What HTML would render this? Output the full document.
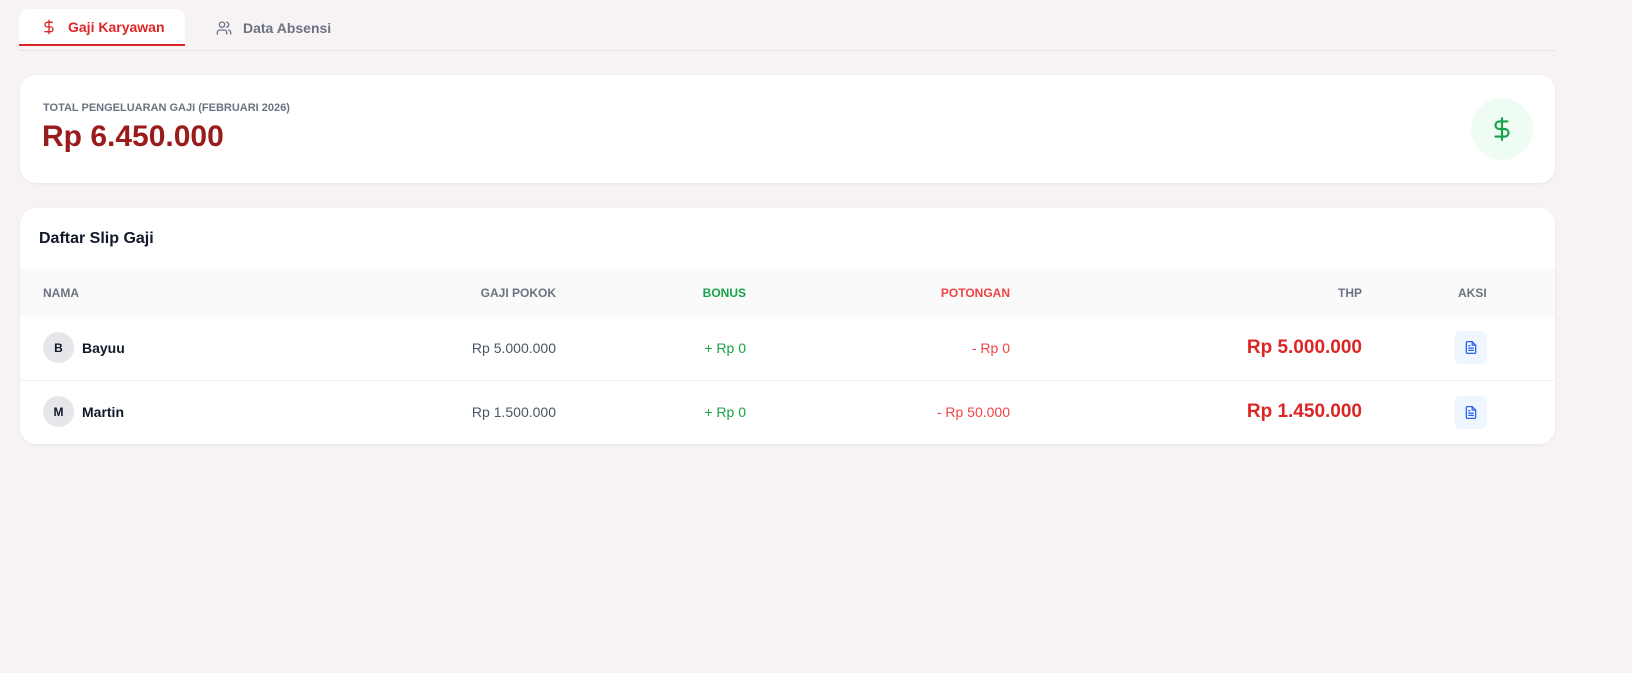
<!DOCTYPE html>
<html><head><style>
*{box-sizing:border-box;margin:0;padding:0}
body{width:1632px;height:673px;background:#f7f3f4;font-family:"Liberation Sans",Arial,sans-serif;position:relative;overflow:hidden}
.abs{position:absolute}
.tabline{left:19px;top:50px;width:1536px;height:1px;background:#e2e4e9}
.tab1{left:19px;top:9px;width:166px;height:37px;background:#fff;border-radius:10px 10px 0 0;border-bottom:2px solid #dc2626}
.card{background:#fff;border-radius:16px;box-shadow:0 1px 3px rgba(0,0,0,.06)}
.t{position:absolute;white-space:nowrap}
.r{text-align:right}
.hd{font-size:12px;font-weight:bold;color:#6b7280}
.cell{font-size:14px;color:#4b5563}
.btn{position:absolute;width:33px;height:33px;border-radius:7px;background:#eff6ff;display:flex;align-items:center;justify-content:center}
.av{position:absolute;left:23px;width:31px;height:31px;border-radius:50%;background:#e5e7eb;font-size:12px;font-weight:bold;color:#111827;display:flex;align-items:center;justify-content:center}
</style></head><body>
<div class="abs tabline"></div>
<div class="abs tab1"></div>
<svg class="abs" style="left:41px;top:19px" width="16" height="16" viewBox="0 0 24 24" fill="none" stroke="#dc2626" stroke-width="2" stroke-linecap="round"><path d="M12 2v20M17 5H9.5a3.5 3.5 0 0 0 0 7h5a3.5 3.5 0 0 1 0 7H6"/></svg>
<div class="t" style="left:68px;top:19px;font-size:14px;font-weight:bold;color:#dc2626">Gaji Karyawan</div>
<svg class="abs" style="left:216px;top:20px" width="16" height="16" viewBox="0 0 24 24" fill="none" stroke="#6b7280" stroke-width="2" stroke-linecap="round"><path d="M16 21v-2a4 4 0 0 0-4-4H6a4 4 0 0 0-4 4v2"/><circle cx="9" cy="7" r="4"/><path d="M22 21v-2a4 4 0 0 0-3-3.87M16 3.13a4 4 0 0 1 0 7.75"/></svg>
<div class="t" style="left:243px;top:20px;font-size:14px;font-weight:bold;color:#6b7280">Data Absensi</div>

<div class="abs card" style="left:20px;top:75px;width:1535px;height:108px">
 <div class="t" style="left:23px;top:27px;font-size:11px;font-weight:bold;color:#6b7280">TOTAL PENGELUARAN GAJI (FEBRUARI 2026)</div>
 <div class="t" style="left:22px;top:45px;font-size:30px;font-weight:bold;color:#991b1b">Rp 6.450.000</div>
 <div class="abs" style="left:1451px;top:23px;width:62px;height:62px;border-radius:50%;background:#effcf3;display:flex;align-items:center;justify-content:center">
  <svg width="26" height="30" viewBox="0 0 24 24" fill="none" stroke="#16a34a" stroke-width="2" stroke-linecap="round"><path d="M12 2v20M17 5H9.5a3.5 3.5 0 0 0 0 7h5a3.5 3.5 0 0 1 0 7H6"/></svg>
 </div>
</div>

<div class="abs card" style="left:20px;top:208px;width:1535px;height:236px;overflow:hidden">
 <div class="t" style="left:19px;top:22px;font-size:16px;font-weight:bold;color:#111827">Daftar Slip Gaji</div>
 <div class="abs" style="left:0;top:60px;width:100%;height:49px;background:#fafafa"></div>
 <div class="t hd" style="left:23px;top:78px">NAMA</div>
 <div class="t hd r" style="right:999px;top:78px">GAJI POKOK</div>
 <div class="t hd r" style="right:809px;top:78px;color:#16a34a">BONUS</div>
 <div class="t hd r" style="right:545px;top:78px;color:#ef4444">POTONGAN</div>
 <div class="t hd r" style="right:193px;top:78px">THP</div>
 <div class="t hd" style="left:1438px;top:78px">AKSI</div>
 <div class="abs" style="left:0;top:172px;width:100%;height:1px;background:#f1f2f4"></div>

 <div class="av" style="top:124px">B</div>
 <div class="t" style="left:62px;top:132px;font-size:14px;font-weight:bold;color:#111827">Bayuu</div>
 <div class="t cell r" style="right:999px;top:132px">Rp 5.000.000</div>
 <div class="t cell r" style="right:809px;top:132px;color:#16a34a">+ Rp 0</div>
 <div class="t cell r" style="right:545px;top:132px;color:#ef4444">- Rp 0</div>
 <div class="t r" style="right:193px;top:129px;font-size:19px;font-weight:bold;color:#dc2626">Rp 5.000.000</div>
 <div class="btn" style="left:1434px;top:123px"><svg width="14" height="15" viewBox="0 0 24 24" fill="none" stroke="#2563eb" stroke-width="2.2" stroke-linecap="round" stroke-linejoin="round"><path d="M14 2H6a2 2 0 0 0-2 2v16a2 2 0 0 0 2 2h12a2 2 0 0 0 2-2V8z"/><path d="M14 2v6h6M16 13H8M16 17H8M10 9H8"/></svg></div>

 <div class="av" style="top:188px">M</div>
 <div class="t" style="left:62px;top:196px;font-size:14px;font-weight:bold;color:#111827">Martin</div>
 <div class="t cell r" style="right:999px;top:196px">Rp 1.500.000</div>
 <div class="t cell r" style="right:809px;top:196px;color:#16a34a">+ Rp 0</div>
 <div class="t cell r" style="right:545px;top:196px;color:#ef4444">- Rp 50.000</div>
 <div class="t r" style="right:193px;top:193px;font-size:19px;font-weight:bold;color:#dc2626">Rp 1.450.000</div>
 <div class="btn" style="left:1434px;top:188px"><svg width="14" height="15" viewBox="0 0 24 24" fill="none" stroke="#2563eb" stroke-width="2.2" stroke-linecap="round" stroke-linejoin="round"><path d="M14 2H6a2 2 0 0 0-2 2v16a2 2 0 0 0 2 2h12a2 2 0 0 0 2-2V8z"/><path d="M14 2v6h6M16 13H8M16 17H8M10 9H8"/></svg></div>
</div>
</body></html>
